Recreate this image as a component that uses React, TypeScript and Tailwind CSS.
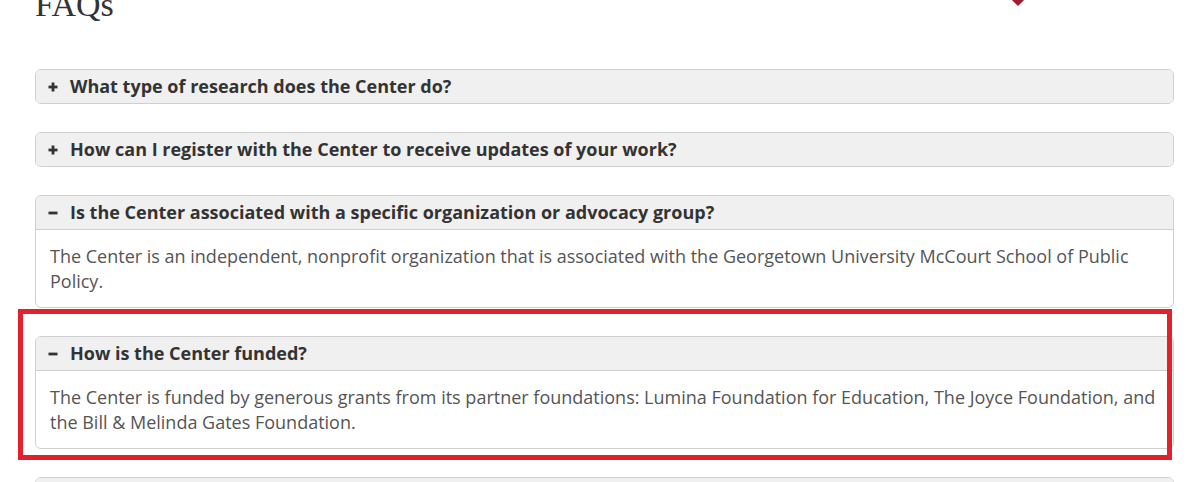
import type { ReactNode } from "react";

type Faq = { q: string; a?: string; open?: boolean };

const FAQS: Faq[] = [
  { q: "What type of research does the Center do?" },
  { q: "How can I register with the Center to receive updates of your work?" },
  {
    q: "Is the Center associated with a specific organization or advocacy group?",
    a: "The Center is an independent, nonprofit organization that is associated with the Georgetown University McCourt School of Public Policy.",
    open: true,
  },
  {
    q: "How is the Center funded?",
    a: "The Center is funded by generous grants from its partner foundations: Lumina Foundation for Education, The Joyce Foundation, and the Bill & Melinda Gates Foundation.",
    open: true,
  },
  { q: "How can I contact the Center?" },
];

function ToggleIcon({ open }: { open?: boolean }) {
  return (
    <svg width="10" height="10" viewBox="0 0 10 10" className="shrink-0">
      <rect x="0.5" y="3.6" width="9" height="2.8" fill="#333" />
      {!open && <rect x="3.6" y="0.5" width="2.8" height="9" fill="#333" />}
    </svg>
  );
}

function FaqItem({ q, a, open }: Faq): ReactNode {
  return (
    <div className="overflow-hidden rounded-[6px] border border-[#cfcfcf] bg-white">
      <div
        className={`flex items-center gap-[12px] bg-[#f0f0f0] py-1 pl-[12px] pr-3 ${
          open ? "border-b border-[#cfcfcf]" : ""
        }`}
      >
        <ToggleIcon open={open} />
        <span className="text-[18px] font-bold leading-[25px] text-[#333]">{q}</span>
      </div>
      {open && a && (
        <div className="px-[14px] pt-[14px] pb-[13px] text-[18px] leading-[25px] text-[#555]">
          {a}
        </div>
      )}
    </div>
  );
}

export default function App() {
  return (
    <div
      className="relative h-[482px] w-[1194px] overflow-hidden bg-white"
      style={{ fontFamily: '"Open Sans", "Noto Sans", sans-serif' }}
    >
      {/* bottom tip of the section marker */}
      <div className="absolute left-[1013px] top-[-6px] h-[10px] w-[10px] rotate-45 bg-[#a3192d]" />

      <div className="pl-[35px] pr-[20px]">
        <h1
          className="mt-[-14px] text-[34px] font-normal leading-[37px] text-[#333]"
          style={{ fontFamily: '"Liberation Serif", "DejaVu Serif", serif' }}
        >
          FAQs
        </h1>

        <div className="mt-[46px] flex flex-col gap-[28px]">
          {FAQS.map((f) => (
            <FaqItem key={f.q} {...f} />
          ))}
        </div>
      </div>

      {/* highlight annotation */}
      <div className="pointer-events-none absolute left-[18px] top-[309px] h-[151px] w-[1154px] border-[5px] border-[#e3202b]" />
    </div>
  );
}
